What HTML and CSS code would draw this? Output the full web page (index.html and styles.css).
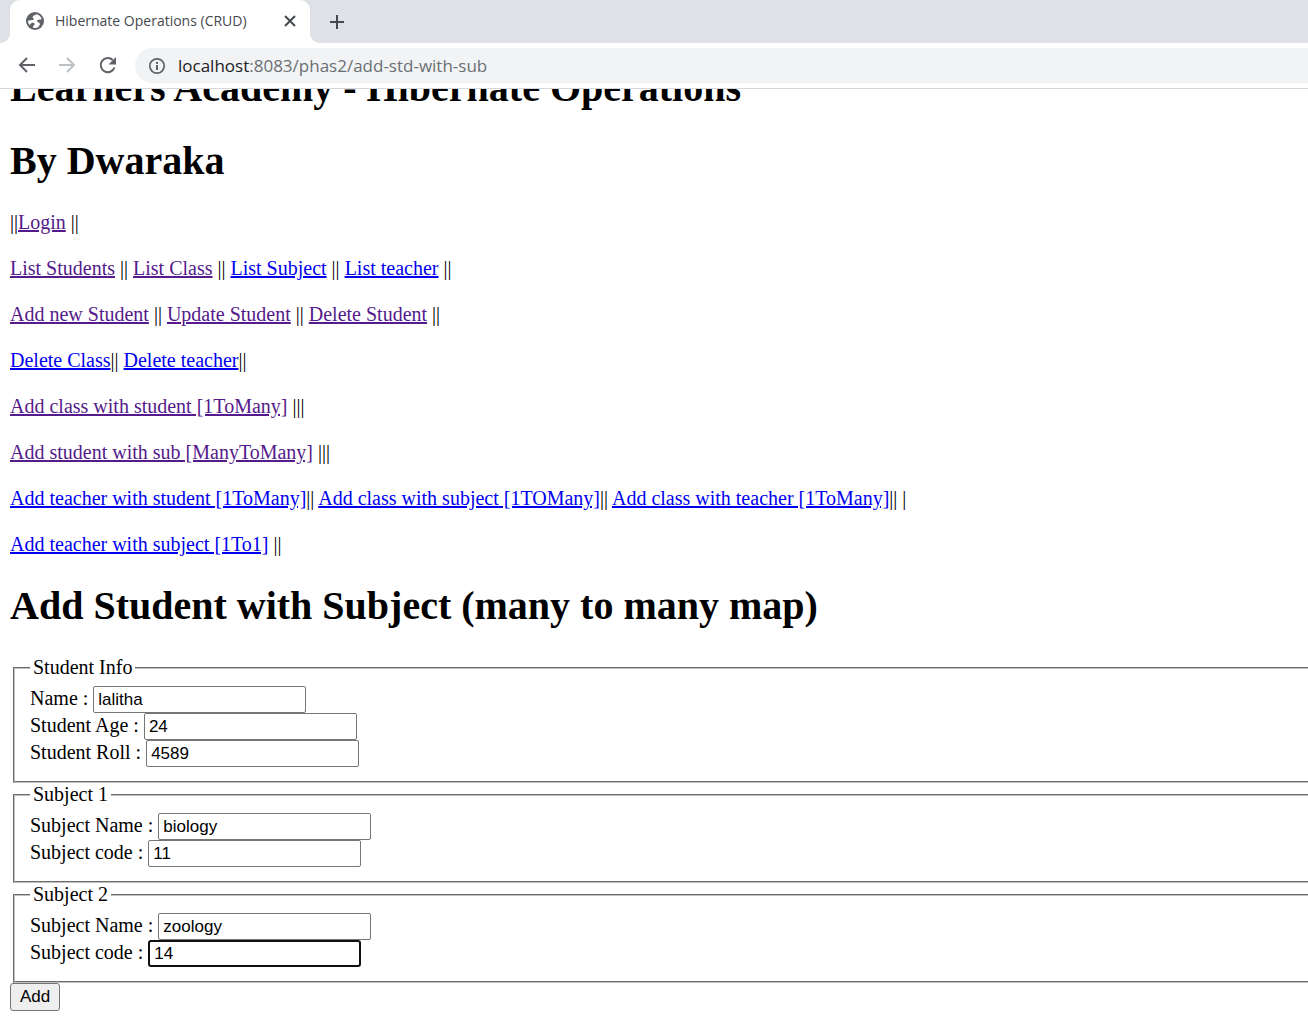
FILE: index.html
```html
<!DOCTYPE html>
<html lang="en">
<head>
<meta charset="utf-8">
<title>Hibernate Operations (CRUD)</title>
<link rel="stylesheet" href="styles.css">
</head>
<body>
<header class="browser">
  <div class="tabstrip">
    <div class="tab">
      <svg class="favicon" width="18" height="18" viewBox="0 0 18 18" aria-hidden="true"><circle cx="9" cy="9" r="9" fill="#5f6368"/><path fill="#fff" d="M10.800 2.300C9.600 3.300 7 3.200 6.600 5 6.400 6.100 8 6.300 7.800 7.300 7.600 8.400 5.800 8 4.500 8.200L2 8.800C2 10.500 2.500 11.900 3.400 13.100L5.500 11C7 10.200 8.900 10.800 8.700 12.300 8.600 13.400 7.300 13.500 6.900 14.400L7.400 15.800C9 16.300 10.800 16 12.200 15.200 12.400 13.800 14.100 13.600 13.900 12 13.700 10.500 12 10.400 11.200 9.500 10.500 8.700 11.300 7.900 12.500 7.700 13.700 7.500 14.800 7.500 15.700 7.300 15 4.900 13.200 3 10.800 2.300Z"/></svg>
      <span class="tab-title">Hibernate Operations (CRUD)</span>
      <button class="icon-button" type="button" aria-label="Close tab"><svg width="12" height="12" viewBox="0 0 12 12"><path d="M1 1l10 10M11 1L1 11" stroke="#45494d" stroke-width="2" fill="none"/></svg></button>
    </div>
    <button class="icon-button new-tab" type="button" aria-label="New tab"><svg width="16" height="16" viewBox="0 0 16 16"><path d="M8 1v14M1 8h14" stroke="#45494d" stroke-width="2" fill="none"/></svg></button>
  </div>
  <div class="toolbar">
    <button class="icon-button" type="button" aria-label="Back"><svg width="20" height="20" viewBox="0 0 20 20"><path d="M17 9H3M9 2L2 9l7 7" stroke="#5f6368" stroke-width="2" fill="none"/></svg></button>
    <button class="icon-button" type="button" aria-label="Forward"><svg width="20" height="20" viewBox="0 0 20 20"><path d="M1 9h14M9 2l7 7-7 7" stroke="#bdc1c6" stroke-width="2" fill="none"/></svg></button>
    <button class="icon-button" type="button" aria-label="Reload"><svg width="20" height="20" viewBox="0 0 20 20"><path d="M16.500 11.500A7.100 7.100 0 1 1 14.800 4" stroke="#5f6368" stroke-width="2" fill="none"/><path d="M18 1v7.500H10.500z" fill="#5f6368"/></svg></button>
    <div class="address">
      <svg width="18" height="18" viewBox="0 0 18 18" aria-hidden="true"><circle cx="9" cy="9" r="7.200" stroke="#5f6368" stroke-width="1.700" fill="none"/><path d="M9 8v5M9 5v2" stroke="#5f6368" stroke-width="2"/></svg>
      <span class="url"><span class="host">localhost</span>:8083/phas2/add-std-with-sub</span>
    </div>
  </div>
</header>
<main class="view">
  <div class="page">
    <h1>Learners Academy - Hibernate Operations</h1>
    <h1>By Dwaraka</h1>
    <nav>
      <p>||<a class="seen" href="#login">Login</a> ||</p>
      <p><a class="seen" href="#students">List Students</a> || <a class="seen" href="#classes">List Class</a> || <a href="#subjects">List Subject</a> || <a href="#teachers">List teacher</a> ||</p>
      <p><a class="seen" href="#add-student">Add new Student</a> || <a class="seen" href="#update-student">Update Student</a> || <a class="seen" href="#delete-student">Delete Student</a> ||</p>
      <p><a href="#delete-class">Delete Class</a>|| <a href="#delete-teacher">Delete teacher</a>||</p>
      <p><a class="seen" href="#class-student">Add class with student [1ToMany]</a> |||</p>
      <p><a class="seen" href="#student-sub">Add student with sub [ManyToMany]</a> |||</p>
      <p><a href="#teacher-student">Add teacher with student [1ToMany]</a>|| <a href="#class-subject">Add class with subject [1TOMany]</a>|| <a href="#class-teacher">Add class with teacher [1ToMany]</a>|| |</p>
      <p><a href="#teacher-subject">Add teacher with subject [1To1]</a> ||</p>
    </nav>
    <h1>Add Student with Subject (many to many map)</h1>
    <form>
      <fieldset>
        <legend>Student Info</legend>
        <div class="field"><label for="name">Name :</label> <input id="name" type="text" value="lalitha"></div>
        <div class="field"><label for="age">Student Age :</label> <input id="age" type="text" value="24"></div>
        <div class="field"><label for="roll">Student Roll :</label> <input id="roll" type="text" value="4589"></div>
      </fieldset>
      <fieldset>
        <legend>Subject 1</legend>
        <div class="field"><label for="sub1">Subject Name :</label> <input id="sub1" type="text" value="biology"></div>
        <div class="field"><label for="code1">Subject code :</label> <input id="code1" type="text" value="11"></div>
      </fieldset>
      <fieldset>
        <legend>Subject 2</legend>
        <div class="field"><label for="sub2">Subject Name :</label> <input id="sub2" type="text" value="zoology"></div>
        <div class="field"><label for="code2">Subject code :</label> <input id="code2" class="active" type="text" value="14"></div>
      </fieldset>
      <button class="submit" type="submit">Add</button>
    </form>
  </div>
</main>
</body>
</html>
```
FILE: styles.css
```css
* { box-sizing: border-box; }

body {
  margin: 0;
  background: #fff;
  color: #000;
  font: 20px/23px "Liberation Serif", "Times New Roman", serif;
}

/* Browser frame */
.browser {
  font-family: "Open Sans", "Noto Sans", sans-serif;
  border-bottom: 1px solid #d5d7da;
}

.icon-button {
  display: flex;
  align-items: center;
  justify-content: center;
  padding: 0;
  border: 0;
  background: none;
}

.tabstrip {
  display: flex;
  align-items: center;
  height: 43px;
  padding-left: 10px;
  background: #dee1e6;
}

.tab {
  position: relative;
  display: flex;
  align-items: center;
  width: 300px;
  height: 43px;
  padding: 0 14px 2px 16px;
  border-radius: 10px 10px 0 0;
  background: #fff;
}

.tab::before,
.tab::after {
  content: "";
  position: absolute;
  bottom: 0;
  width: 10px;
  height: 10px;
}

.tab::before {
  right: 100%;
  background: radial-gradient(circle at 0 0, #dee1e6 10px, #fff 10px);
}

.tab::after {
  left: 100%;
  background: radial-gradient(circle at 100% 0, #dee1e6 10px, #fff 10px);
}

.tab-title {
  flex: 1;
  margin-left: 11px;
  color: #45494d;
  font-size: 14px;
  line-height: 20px;
  white-space: nowrap;
}

.new-tab { margin-left: 19px; }

.toolbar {
  display: flex;
  align-items: center;
  gap: 20px;
  height: 45px;
  padding-left: 18px;
}

.address {
  display: flex;
  flex: 1;
  align-items: center;
  gap: 12px;
  height: 35px;
  margin-left: -3px;
  padding-left: 13px;
  border-radius: 18px 0 0 18px;
  background: #f1f3f4;
}

.url {
  color: #6b6f73;
  font-size: 17px;
  line-height: 24px;
}

.host { color: #202124; }

/* Page, scrolled down a little */
.view { overflow: hidden; }

.page {
  margin-top: -24px;
  padding-left: 10px;
}

h1 {
  margin: 0 0 27px;
  font-size: 40px;
  line-height: 46px;
}

nav { margin-bottom: 27px; }

p { margin: 0 0 23px; }

a { color: #0000ee; }

.seen { color: #551a8b; }

fieldset {
  margin: 0 0 0 3px;
  padding: 7px 0 14px 15px;
  border: 2px groove #c0c0c0;
  border-right: 0;
}

legend { padding: 0 3px; }

.field {
  display: flex;
  align-items: baseline;
  gap: 5px;
  height: 27px;
}

input {
  width: 213px;
  height: 27px;
  padding: 1px 4px;
  border: 1px solid #767676;
  border-radius: 2px;
  background: #fff;
  color: #000;
  font: 17px "Liberation Sans", Arial, sans-serif;
}

.active {
  padding: 0 4px;
  border: 2px solid #101010;
  border-radius: 3px;
}

.submit {
  display: block;
  width: 50px;
  height: 28px;
  padding: 0;
  border: 1px solid #767676;
  border-radius: 3px;
  background: #efefef;
  color: #000;
  font: 17px "Liberation Sans", Arial, sans-serif;
}
```
